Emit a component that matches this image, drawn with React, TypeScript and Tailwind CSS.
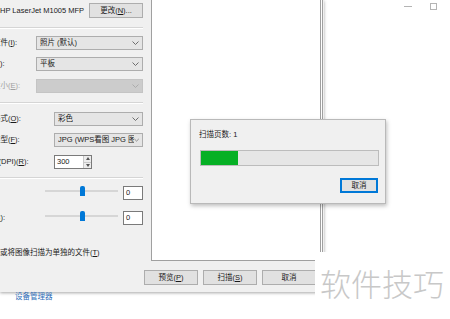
import React from "react";

const FONT = {
  fontFamily: '"Liberation Sans", "Noto Sans CJK SC", sans-serif',
};

const Chevron = ({ color = "#606060" }: { color?: string }) => (
  <svg width="7" height="4" viewBox="0 0 7 4" fill="none">
    <path d="M0.5 0.5 L3.5 3.5 L6.5 0.5" stroke={color} strokeWidth="0.9" />
  </svg>
);

const Combo = ({
  text,
  width,
  disabled,
}: {
  text?: string;
  width: string;
  disabled?: boolean;
}) => (
  <div
    className={`flex h-full items-center justify-between border pl-[3px] pr-[3px] ${width} ${
      disabled ? "border-[#c4c4c4] bg-[#cccccc]" : "border-[#adadad] bg-[#e5e5e5]"
    }`}
  >
    <span className="whitespace-nowrap overflow-hidden">{text}</span>
    <Chevron color={disabled ? "#a8a8a8" : "#606060"} />
  </div>
);

const Separator = ({ mt }: { mt: string }) => (
  <div className={`${mt} h-[2px] border-t border-[#d5d5d5] border-b border-b-white`} />
);

const Btn = ({ children }: { children: React.ReactNode }) => (
  <button className="flex h-[15px] w-[54px] items-center justify-center border border-[#adadad] bg-[#e1e1e1] text-[7.5px] text-[#1a1a1a]">
    {children}
  </button>
);

const SliderRow = ({
  label,
  mt,
}: {
  label: React.ReactNode;
  mt: string;
}) => (
  <div className={`flex h-[14px] items-center ${mt}`}>
    <span className="-ml-[30px] w-[75px] shrink-0 whitespace-nowrap">{label}</span>
    <div className="relative h-[14px] w-[73px]">
      <div className="absolute left-0 right-0 top-[4px] h-[2px] bg-[#d6d6d6]" />
      <div className="absolute left-[35px] top-0 h-[10px] w-[5px] rounded-t-[2px] bg-[#0078d7]" />
    </div>
    <div className="ml-[5px] flex h-[14px] w-[20px] items-center border border-[#7a7a7a] bg-white pl-[2px]">
      0
    </div>
  </div>
);

export default function App() {
  return (
    <div
      className="relative h-[319px] w-[450px] overflow-hidden bg-white text-[7.5px] text-[#1a1a1a]"
      style={FONT}
    >
      {/* main scan dialog */}
      <div className="flex h-[292px] w-[324px] flex-col overflow-hidden bg-[#f0f0f0] shadow-[0_1px_3px_rgba(0,0,0,0.35)]">
        <div className="flex h-[261px]">
          {/* settings */}
          <div className="flex w-[151px] shrink-0 flex-col pr-[8px]">
            <div className="mt-[3px] flex h-[15px] items-center">
              <span className="-ml-[34px] w-[34px] shrink-0 whitespace-nowrap">扫描仪:</span>
              <span className="whitespace-nowrap">HP LaserJet M1005 MFP</span>
              <div className="ml-auto">
                <Btn>
                  更改(<u>N</u>)...
                </Btn>
              </div>
            </div>
            <Separator mt="mt-[9px]" />
            <div className="mt-[7px] flex h-[14px] items-center">
              <span className="-ml-[22px] w-[58px] shrink-0 whitespace-nowrap">
                配置文件(<u>I</u>):
              </span>
              <Combo text="照片 (默认)" width="w-[107px]" />
            </div>
            <div className="mt-[7px] flex h-[14px] items-center">
              <span className="-ml-[23px] w-[59px] shrink-0 whitespace-nowrap">
                来源(<u>U</u>):
              </span>
              <Combo text="平板" width="w-[107px]" />
            </div>
            <div className="mt-[8px] flex h-[14px] items-center">
              <span className="-ml-[22px] w-[58px] shrink-0 whitespace-nowrap text-[#a0a0a0]">
                纸张大小(<u>E</u>):
              </span>
              <Combo width="w-[107px]" disabled />
            </div>
            <Separator mt="mt-[9px]" />
            <div className="mt-[8px] flex h-[14px] items-center">
              <span className="-ml-[22px] w-[76px] shrink-0 whitespace-nowrap">
                颜色格式(<u>O</u>):
              </span>
              <Combo text="彩色" width="w-[89px]" />
            </div>
            <div className="mt-[7px] flex h-[14px] items-center">
              <span className="-ml-[22px] w-[76px] shrink-0 whitespace-nowrap">
                文件类型(<u>F</u>):
              </span>
              <Combo text="JPG (WPS看图 JPG 图片文件)" width="w-[89px]" />
            </div>
            <div className="mt-[8px] flex h-[14px] items-center">
              <span className="-ml-[24px] w-[78px] shrink-0 whitespace-nowrap">
                分辨率(DPI)(<u>R</u>):
              </span>
              <div className="flex h-[14px] w-[38px] border border-[#7a7a7a] bg-white">
                <span className="flex flex-1 items-center pl-[2px]">300</span>
                <div className="flex w-[8px] flex-col border-l border-[#c8c8c8]">
                  <div className="flex flex-1 items-center justify-center border-b border-[#c8c8c8] bg-[#ececec]">
                    <svg width="4" height="3" viewBox="0 0 4 3">
                      <path d="M0 3 L2 0 L4 3 Z" fill="#555" />
                    </svg>
                  </div>
                  <div className="flex flex-1 items-center justify-center bg-[#ececec]">
                    <svg width="4" height="3" viewBox="0 0 4 3">
                      <path d="M0 0 L2 3 L4 0 Z" fill="#555" />
                    </svg>
                  </div>
                </div>
              </div>
            </div>
            <Separator mt="mt-[8px]" />
            <SliderRow
              mt="mt-[7px]"
              label={
                <>
                  亮度(<u>B</u>):
                </>
              }
            />
            <SliderRow
              mt="mt-[11px]"
              label={
                <>
                  对比度(<u>C</u>):
                </>
              }
            />
            <div className="mt-[23px] flex h-[10px] items-center">
              <div className="-ml-[27px] flex items-center whitespace-nowrap">
                <span className="mr-[3px] h-[9px] w-[9px] border border-[#333] bg-white" />
                预览或将图像扫描为单独的文件(<u>T</u>)
              </div>
            </div>
          </div>
          {/* preview */}
          <div className="-mt-[2px] h-[263px] w-[172px] shrink-0 border-l border-b border-t border-r-[3px] border-double border-[#a0a0a0] bg-white" />
        </div>
        <div className="mt-[9px] flex justify-end gap-[5px] pr-[8px]">
          <Btn>
            预览(<u>P</u>)
          </Btn>
          <Btn>
            扫描(<u>S</u>)
          </Btn>
          <Btn>取消</Btn>
        </div>
      </div>
      <div className="pl-[15px] text-[7.5px] leading-[10px] text-[#2f6db8]">设备管理器</div>

      {/* background window caption buttons */}
      <div className="absolute right-[13px] top-[3px] flex items-center gap-[18px]">
        <div className="h-px w-[8px] bg-[#b4b4b4]" />
        <div className="h-[7px] w-[7px] border border-[#b4b4b4]" />
      </div>

      {/* progress dialog */}
      <div className="absolute left-[190px] top-[119px] flex h-[85px] w-[196px] flex-col border border-[#b9b9b9] bg-[#f0f0f0] pl-[8px] shadow-[1px_2px_4px_rgba(0,0,0,0.25)]">
        <div className="mt-[10px] h-[10px] leading-[10px]">扫描页数: 1</div>
        <div className="ml-[1px] mt-[10px] h-[16px] w-[179px] border border-[#bcbcbc] bg-[#e6e6e6]">
          <div className="h-full w-[37px] bg-[#06b025]" />
        </div>
        <div className="mt-[12px] flex justify-end pr-[7px]">
          <button className="flex h-[15px] w-[38px] items-center justify-center border border-[#0078d7] bg-[#e1e1e1] text-[7.5px] shadow-[inset_0_0_0_1px_#0078d7]">
            取消
          </button>
        </div>
      </div>

      {/* watermark */}
      <div
        className="absolute left-[315px] top-[252px] h-[55px] w-[135px] bg-white pl-[5px] pt-[15px] text-[31px] leading-[31px] text-[#c8c8c8]"
        style={{ fontFamily: '"Noto Sans CJK SC", sans-serif', fontWeight: 300 }}
      >
        软件技巧
      </div>
    </div>
  );
}
